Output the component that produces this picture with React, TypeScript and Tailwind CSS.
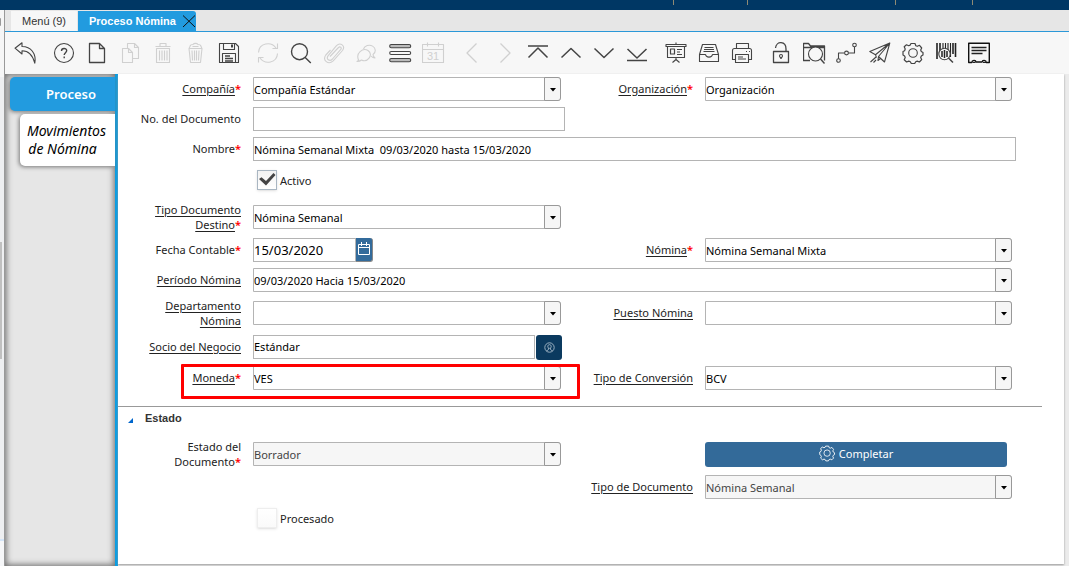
import React, { useState } from "react";

type IconName =
  | "undo" | "help" | "file" | "copy" | "trash" | "trashAll" | "save"
  | "refresh" | "search" | "clip" | "chat" | "grid" | "calendar"
  | "left" | "right" | "first" | "up" | "down" | "last"
  | "board" | "archive" | "print"
  | "lock" | "zoomAcross" | "workflow" | "send" | "gear" | "barcode" | "receipt";

const drawings: Record<IconName, React.ReactNode> = {
  undo: <path d="M8 .8 1 6.200 8 12V8.800c6 0 10.500 3.500 12.800 12.400C22.500 11.500 17 4.500 8 4.500Z" />,
  help: (
    <>
      <circle cx="11" cy="11" r="9.500" />
      <path strokeWidth="1.400" d="M8.500 9c0-3.400 5.200-3.300 5.200-.4 0 2-2.500 2.200-2.500 4.500M11.200 14.600v1.600" />
    </>
  ),
  file: <path strokeWidth="1.300" d="M3.500 1.500h10l5 5v14h-15ZM13.500 1.500v5h5" />,
  copy: (
    <>
      <path d="M8.500 6.500v-5h7l4 4v11h-6M15.500 1.500v4h4" />
      <path d="M3.500 6.500h6l4 4v10h-10ZM9.500 6.500v4h4" />
    </>
  ),
  trash: <path d="M3.500 4.500h15M8 4.500v-3h6v3M4.500 6.500h13v14h-13ZM7.500 8.500v10M10 8.500v10M12.500 8.500v10M15 8.500v10" />,
  trashAll: <path d="M4 6.500h13M5 4.500c0-2 1-2 3-2 1-1.500 4-1.500 5 0 2 0 3 0 3 2l1 2-1.500 14h-10L4 6.500ZM7 8.500l.5 10M9.500 8.500v10M11.500 8.500v10M14 8.500l-.5 10M7.500 4.500h6" />,
  save: (
    <>
      <path d="M1.500 1.500h16l3 3v16h-19Z" />
      <path d="M5.500 1.500v6h11v-6M4.500 20.500v-9h13v9" />
      <path strokeWidth="2" d="M14 2.500v3" />
      <path strokeWidth="1.500" d="M7 14h5M7 16.500h8M7 19h8" />
    </>
  ),
  refresh: <path d="M1.500 10.500C2 1 14 -1 19 6M20.500 1.500v5h-5M20.500 11.500C20 21 8 23 3 16M1.500 20.500v-5h5" />,
  search: <path strokeWidth="1.400" d="M17.500 9.700a8 8 0 1 1-16 0 8 8 0 0 1 16 0ZM15.200 15.500l5.600 5.500" />,
  clip: <path d="m7 14.500 8.500-9c1.600-1.500 3.600.2 2.300 1.900L9.500 17c-3 3.200-6.800 0-4.300-3.300l8.300-10c3.800-4 9.300.3 6 4.800l-9.300 10.300c-5 4.700-11-.5-7.400-5.800L7.500 8" />,
  chat: (
    <>
      <path d="M7.500 7a6 5.200 0 1 1 9.500 5.500c0 1.500.8 2.500 2 3.500-2 0-3-.8-4-2" />
      <path d="M2.800 18.500C-1 11 7 5.500 12 8.500c6 4-.5 12.500-6.500 9.500-1 1-3 1.500-4.500 1.500.8-.5 1.300-.7 1.800-1Z" />
    </>
  ),
  grid: (
    <>
      <rect x=".7" y="2.500" width="21" height="3.200" rx="1.500" fill="#bbb" />
      <rect x=".7" y="9.500" width="21" height="3" rx="1.500" />
      <rect x=".7" y="16.500" width="21" height="3.200" rx="1.500" fill="#bbb" />
    </>
  ),
  calendar: (
    <>
      <path d="M.5 2.500h21v18H.5ZM.5 7.500h21M5.500 .5v4M16.500 .5v4" />
      <text x="11" y="18" textAnchor="middle" fontSize="11" fill="currentColor" stroke="none" fontFamily="Liberation Sans, sans-serif">31</text>
    </>
  ),
  left: <path strokeWidth="1.300" d="M15.500 1.500 6 11l9.500 9.500" />,
  right: <path strokeWidth="1.300" d="M6.500 1.500 16 11l-9.500 9.500" />,
  first: <path strokeWidth="1.500" d="M1 4h20M1.500 15.500 11 6l9.500 9.500" />,
  up: <path strokeWidth="1.500" d="M1.500 15.500 11 6.500l9.500 9" />,
  down: <path strokeWidth="1.500" d="M1.500 6.500 11 15.500l9.500-9" />,
  last: <path strokeWidth="1.500" d="M1 18.500h20M1.500 7 11 16l9.500-9" />,
  board: (
    <>
      <path d="M1 2.500h20v2H1ZM2.500 4.500v11h17v-11M11 .5v2M11 15.500v2M7.500 20.500l3.500-3 3.500 3" />
      <path strokeWidth="1.200" d="M5.500 7h4v5h-4ZM12 7.500h5M12 10h3M12 12.500h5" />
    </>
  ),
  archive: (
    <>
      <path d="M4.500 2.500h13l3 10v7h-19v-7ZM1.500 12.500h6c.5 3.500 6.500 3.500 7 0h6" />
      <path d="M6.500 5.500h9M6 7.500h10M5.500 9.500h11" />
    </>
  ),
  print: (
    <>
      <path d="M5.500 6.500v-5h12v5M4.500 17.500h-3v-9c0-1 1-2 2-2h15c1 0 2 1 2 2v9h-3" />
      <path d="M4.500 12.500h13v8h-13ZM7 15h5M7 17h8M15 9.500h1M18 9.500h1" />
    </>
  ),
  lock: (
    <>
      <path strokeWidth="1.300" d="M3.500 9.500h15v11h-15ZM5.500 6c.8-7.500 10.500-7 10.500 1v2.500" />
      <circle cx="11" cy="14" r="1.500" />
      <path strokeWidth="1.500" d="M11 15v2" />
    </>
  ),
  zoomAcross: (
    <>
      <path strokeWidth="1.300" d="M7 18.500H.5v-17h5l2 2.500h14v14.500M.5 5.500h21" />
      <circle cx="12.500" cy="12" r="7" fill="#f7f7f7" />
      <path strokeWidth="1.400" d="m17.500 17 4 4.500" />
    </>
  ),
  workflow: (
    <>
      <circle cx="2.500" cy="18.500" r="1.800" />
      <circle cx="10.500" cy="11" r="1.900" />
      <circle cx="18.500" cy="3" r="1.800" />
      <path d="M2.500 16.700V11h6M12.500 11h6V5" />
    </>
  ),
  send: <path d="M20.800 1 .8 9.500l5.700 3.200ZM20.800 1 9.500 14.500l6 5.500ZM20.800 1 6.500 12.700l1 3M9.500 14.500l-.5 4 2.500-2M7 15l-5.500 5M7 18l-2.500 2.500" />,
  gear: (
    <>
      <path strokeWidth="1.200" d="M9 1.500h4l.8 2.200 1.500.6 2.200-1 2.200 2.700-1 2 .6 1.500 1.700 1v2.500l-1.700 1-.6 1.500 1 2.200-2.300 2.300-2.200-.9-1.500.6-1 1.800H9.300l-1-1.800-1.500-.6-2.200.9-2.400-2.300 1-2.200-.6-1.500-1.600-1V9.500l1.600-.8.600-1.700-1-2.200 2.300-2 2.200.9 1.500-.6Z" />
      <circle cx="11" cy="11" r="4.300" />
    </>
  ),
  barcode: (
    <>
      <path stroke="#222" strokeWidth="1.600" d="M2 1v16M5 1v13M18 1v11M20.500 1v14" />
      <path stroke="#222" d="M8 1v14M10.500 1v14M13 1v14M15.500 1v14" />
      <circle cx="9.500" cy="12" r="5.700" fill="#f7f7f7" />
      <path stroke="#222" strokeWidth="1.500" d="M7 9v6M9.500 8v8M12 9v6" />
      <path strokeWidth="1.500" d="m13.500 16 4.500 4.500" />
    </>
  ),
  receipt: (
    <>
      <path stroke="#111" strokeWidth="1.400" d="M.7 1.200h20.600v19.300h-3c-.2-2.500-4-2.500-4.200-.5H8c-.2-2-4-2-4.200.5H.7Z" />
      <path stroke="#222" strokeWidth="1.300" d="M3.500 5.500h15M3.500 8.500h15M3.500 11.500h11" />
      <path stroke="#222" d="M4.500 20.500h3M15 20.500h3" />
    </>
  ),
};

type Tool = [IconName, string, boolean?];

const toolGroups: Tool[][] = [
  [["undo", "Deshacer"]],
  [["help", "Ayuda"], ["file", "Nuevo"], ["copy", "Copiar", true], ["trash", "Borrar", true], ["trashAll", "Borrar selección", true], ["save", "Guardar"]],
  [["refresh", "Refrescar", true], ["search", "Buscar"], ["clip", "Adjunto", true], ["chat", "Conversación", true], ["grid", "Multi-registro"], ["calendar", "Calendario", true]],
  [["left", "Anterior", true], ["right", "Siguiente", true], ["first", "Primer registro"], ["up", "Registro previo"], ["down", "Registro siguiente"], ["last", "Último registro"]],
  [["board", "Informe"], ["archive", "Archivo"], ["print", "Imprimir"]],
  [["lock", "Bloquear"], ["zoomAcross", "Visualizar"], ["workflow", "Flujo de trabajo"], ["send", "Solicitud"], ["gear", "Proceso"], ["barcode", "Información"], ["receipt", "Recibo"]],
];

function Icon({ name, className }: { name: IconName; className: string }) {
  return (
    <svg viewBox="0 0 23 23" fill="none" stroke="currentColor" strokeWidth="1.100" strokeLinejoin="round" className={className} aria-hidden="true">
      {drawings[name]}
    </svg>
  );
}

interface LabelProps {
  htmlFor: string;
  lines: string[];
  link?: boolean;
  required?: boolean;
}

function Label({ htmlFor, lines, link, required }: LabelProps) {
  return (
    <label
      htmlFor={htmlFor}
      className={`flex flex-col items-end justify-self-end leading-[15px] whitespace-nowrap ${lines.length === 1 ? "pb-0.5" : ""}`}
    >
      {lines.map((line, index) => (
        <span key={line} className="flex">
          <span className={link ? "underline underline-offset-2" : ""}>{line}</span>
          {required && index === lines.length - 1 && <span className="font-semibold text-[#f00]">*</span>}
        </span>
      ))}
    </label>
  );
}

interface ComboProps {
  id: string;
  value: string;
  wide?: boolean;
  disabled?: boolean;
}

function Combo({ id, value, wide, disabled }: ComboProps) {
  return (
    <div className={`relative mr-1 h-6 ${wide ? "col-span-3" : ""}`}>
      <select
        id={id}
        disabled={disabled}
        defaultValue={value}
        className="block h-6 w-full appearance-none rounded-r-[3px] border border-[#b4b4b4] bg-white text-black opacity-100 disabled:bg-[#f6f6f6] disabled:text-[#444]"
      >
        <option>{value}</option>
      </select>
      <span className="pointer-events-none absolute inset-y-0 right-0 flex w-[17px] items-center justify-center rounded-r-[3px] border border-[#999] bg-[#f6f6f6] pt-0.5">
        <svg viewBox="0 0 6 4" className="h-1 w-1.5" aria-hidden="true"><path d="M0 0h6L3 3.500Z" /></svg>
      </span>
    </div>
  );
}

function Row({ children, className = "" }: { children: React.ReactNode; className?: string }) {
  return (
    <div className={`grid h-[30px] grid-cols-[123fr_312fr_116fr_311fr] items-center gap-x-3 pr-[26px] ${className}`}>
      {children}
    </div>
  );
}

const boxClass = "h-6 border border-[#b4b4b4] bg-white text-black outline-none";

function Check({ id, label, initial, disabled }: { id: string; label: string; initial: boolean; disabled?: boolean }) {
  const [on, setOn] = useState(initial);
  return (
    <div className="col-start-2 flex items-center gap-[3px] pl-1">
      <span className="relative size-5">
        <input
          id={id}
          type="checkbox"
          checked={on}
          disabled={disabled}
          onChange={() => setOn(!on)}
          className="block size-5 appearance-none border border-[#a9b6c2] bg-linear-to-b from-[#f2f2f2] to-white shadow-sm disabled:border-[#eee] disabled:from-white disabled:to-[#fafafa]"
        />
        {on && (
          <svg viewBox="0 0 20 20" className="pointer-events-none absolute inset-0 size-5" aria-hidden="true">
            <path d="m2 9 2.500-1.800L9 11l7.500-8 2 2L9 15.500Z" fill="#444" />
          </svg>
        )}
      </span>
      <label htmlFor={id}>{label}</label>
    </div>
  );
}

export default function App() {
  return (
    <div className="flex min-h-screen flex-col bg-[#e6e6e6] font-['Noto_Sans',sans-serif] text-[11px] leading-[15px] text-[#222]">
      <header className="flex h-2.5 justify-end bg-[#003764] pr-24">
        <span className="mr-[73px] h-[5px] w-px bg-[#8f8b74]" />
        <span className="mr-[147px] h-[5px] w-px bg-[#8f8b74]" />
        <span className="mr-[76px] h-[5px] w-px bg-[#8f8b74]" />
        <span className="h-[5px] w-px bg-[#8f8b74]" />
      </header>

      <div className="flex flex-1">
        <aside className="flex w-[5px] shrink-0 flex-col border-r border-[#999] bg-[#eeeff1]">
          <div className="h-[67px] bg-[#f6f6f6] pt-2">
            <div className="h-2 w-px rounded-r bg-[#999]" />
          </div>
          <div className="mt-[165px] h-[117px] w-0.5 bg-[#c0c0c0]" />
          <div className="mt-auto h-[27px] border-t-2 border-[#d4e5f8] bg-[#f6f7f9]" />
        </aside>

        <div className="flex min-w-0 flex-1 flex-col">
          <nav className="flex h-[22px] items-stretch gap-px border-b border-[#2b98d8] pt-px pl-1.5 font-['Liberation_Sans',sans-serif]">
            <button type="button" className="w-[66px] bg-[#f7f7f7] text-[#333]">Menú (9)</button>
            <div className="flex w-[118px] items-center justify-between rounded-tr-[3px] bg-[#229bdf] pl-[11px]">
              <button type="button" className="font-bold whitespace-nowrap text-white">Proceso Nómina</button>
              <button type="button" aria-label="Cerrar">
                <svg viewBox="0 0 14 14" className="size-3.5" fill="none" stroke="#111" aria-hidden="true">
                  <path d="m1 1.500 12 11.500M13 1.500 1 13" />
                </svg>
              </button>
            </div>
          </nav>

          <div role="toolbar" className="flex h-[42px] gap-1.5 bg-[#f7f7f7] pl-1">
            {toolGroups.map((group, index) => (
              <div key={index} className="flex">
                {group.map(([name, title, off]) => (
                  <button
                    key={name}
                    type="button"
                    aria-label={title}
                    disabled={off}
                    className="w-[33px] px-[5px] pt-px text-[#444] disabled:text-[#d0d0d0]"
                  >
                    <Icon name={name} className="size-[23px]" />
                  </button>
                ))}
              </div>
            ))}
          </div>

          <div className="flex flex-1">
            <div className="flex w-[113px] shrink-0 flex-col items-end gap-[3px] border-r-[3px] border-[#089de3] pt-[3px] text-[13px] leading-[18px] shadow-[inset_0_0_6px_1px_#666]">
              <button type="button" className="h-[34px] w-[105px] rounded-l-[5px] bg-[#229bdf] pl-[17px] font-semibold text-white shadow-[-1px_1px_4px_#777]">
                Proceso
              </button>
              <button type="button" className="h-[52px] w-[95px] rounded-l-[5px] bg-white pr-1 pl-0.5 text-[14px] leading-[18px] text-black italic shadow-[-1px_1px_4px_#777]">
                <span className="block">Movimientos</span>
                <span className="block pr-2">de Nómina</span>
              </button>
            </div>

            <div className="flex min-w-0 flex-1 flex-col bg-[#ebebeb] pr-[5px] pb-0.5">
              <main className="flex-1 bg-white pr-[22px] shadow-[0_1px_2px_#999]">
                <Row>
                  <Label htmlFor="company" lines={["Compañía"]} link required />
                  <Combo id="company" value="Compañía Estándar" />
                  <Label htmlFor="org" lines={["Organización"]} link required />
                  <Combo id="org" value="Organización" />
                </Row>
                <Row>
                  <Label htmlFor="docno" lines={["No. del Documento"]} />
                  <input id="docno" className={boxClass} />
                </Row>
                <Row>
                  <Label htmlFor="name" lines={["Nombre"]} required />
                  <input id="name" className={`col-span-3 ${boxClass}`} defaultValue="Nómina Semanal Mixta  09/03/2020 hasta 15/03/2020" />
                </Row>
                <Row className="mt-px">
                  <Check id="active" label="Activo" initial />
                </Row>
                <Row className="mt-[7px]">
                  <Label htmlFor="doctype-target" lines={["Tipo Documento", "Destino"]} link required />
                  <Combo id="doctype-target" value="Nómina Semanal" />
                </Row>
                <Row className="mt-[3px]">
                  <Label htmlFor="date" lines={["Fecha Contable"]} required />
                  <div className="flex">
                    <input id="date" className={`w-[103px] text-[13px] ${boxClass}`} defaultValue="15/03/2020" />
                    <button type="button" aria-label="Elegir fecha" className="flex h-6 w-[17px] justify-center rounded-r-[3px] border-r border-b border-[#888] bg-[#336b9b] pt-1">
                      <svg viewBox="0 0 14 14" className="size-3.5" fill="none" stroke="#fff" aria-hidden="true">
                        <path d="M1.500 2.500h11v10h-11ZM1.500 5.500h11M4.500 0v4M9.500 0v4" />
                      </svg>
                    </button>
                  </div>
                  <Label htmlFor="payroll" lines={["Nómina"]} link required />
                  <Combo id="payroll" value="Nómina Semanal Mixta" />
                </Row>
                <Row>
                  <Label htmlFor="period" lines={["Período Nómina"]} link />
                  <Combo id="period" value="09/03/2020 Hacia 15/03/2020" wide />
                </Row>
                <Row className="mt-[3px]">
                  <Label htmlFor="department" lines={["Departamento", "Nómina"]} link />
                  <Combo id="department" value="" />
                  <Label htmlFor="job" lines={["Puesto Nómina"]} link />
                  <Combo id="job" value="" />
                </Row>
                <Row className="mt-1">
                  <Label htmlFor="partner" lines={["Socio del Negocio"]} link />
                  <div className="mr-[3px] flex gap-px">
                    <input id="partner" className={`min-w-0 flex-1 ${boxClass}`} defaultValue="Estándar" />
                    <button type="button" aria-label="Buscar socio" className="flex h-[25px] w-[26px] items-center justify-center rounded-[3px] bg-[#0b3a5f]">
                      <svg viewBox="0 0 11 11" className="size-[11px]" fill="none" stroke="#a9bccb" strokeWidth=".9" aria-hidden="true">
                        <circle cx="5.500" cy="5.500" r="4.700" />
                        <path d="M3.800 4.500c0-2.500 3.400-2.500 3.400 0 0 1-.5 1.800-1.700 1.800S3.800 5.500 3.800 4.500ZM4.500 6.200v1.300L2.500 9M6.500 6.200v1.300L8.500 9" />
                      </svg>
                    </button>
                  </div>
                </Row>
                <Row className="relative mt-px">
                  <Label htmlFor="currency" lines={["Moneda"]} link required />
                  <Combo id="currency" value="VES" />
                  <Label htmlFor="rate" lines={["Tipo de Conversión"]} link />
                  <Combo id="rate" value="BCV" />
                  <div className="pointer-events-none absolute top-px left-[63px] h-[35px] w-[399px] rounded-[1px] border-3 border-[#f00]" />
                </Row>

                <section className="mt-[13px] border-t border-[#999]">
                  <h2 className="flex h-[23px] items-center gap-3 pl-2.5 font-['Liberation_Sans',sans-serif] font-bold text-[#333]">
                    <svg viewBox="0 0 5 5" className="mt-1 size-[5px]" aria-hidden="true"><path d="M5 0v5H0Z" fill="#06c" /></svg>
                    Estado
                  </h2>
                  <Row className="mt-[9px]">
                    <Label htmlFor="status" lines={["Estado del", "Documento"]} required />
                    <Combo id="status" value="Borrador" disabled />
                    <button type="button" className="col-start-4 mr-[9px] flex h-[25px] items-center justify-center gap-[3px] rounded-[3px] bg-[#336a99] pb-px text-white">
                      <Icon name="gear" className="size-[17px]" />
                      Completar
                    </button>
                  </Row>
                  <Row className="mt-[3px]">
                    <span className="col-span-2" />
                    <Label htmlFor="doctype" lines={["Tipo de Documento"]} link />
                    <Combo id="doctype" value="Nómina Semanal" disabled />
                  </Row>
                  <Row className="mt-px">
                    <Check id="processed" label="Procesado" initial={false} disabled />
                  </Row>
                </section>
              </main>
            </div>
          </div>
        </div>
      </div>
    </div>
  );
}
